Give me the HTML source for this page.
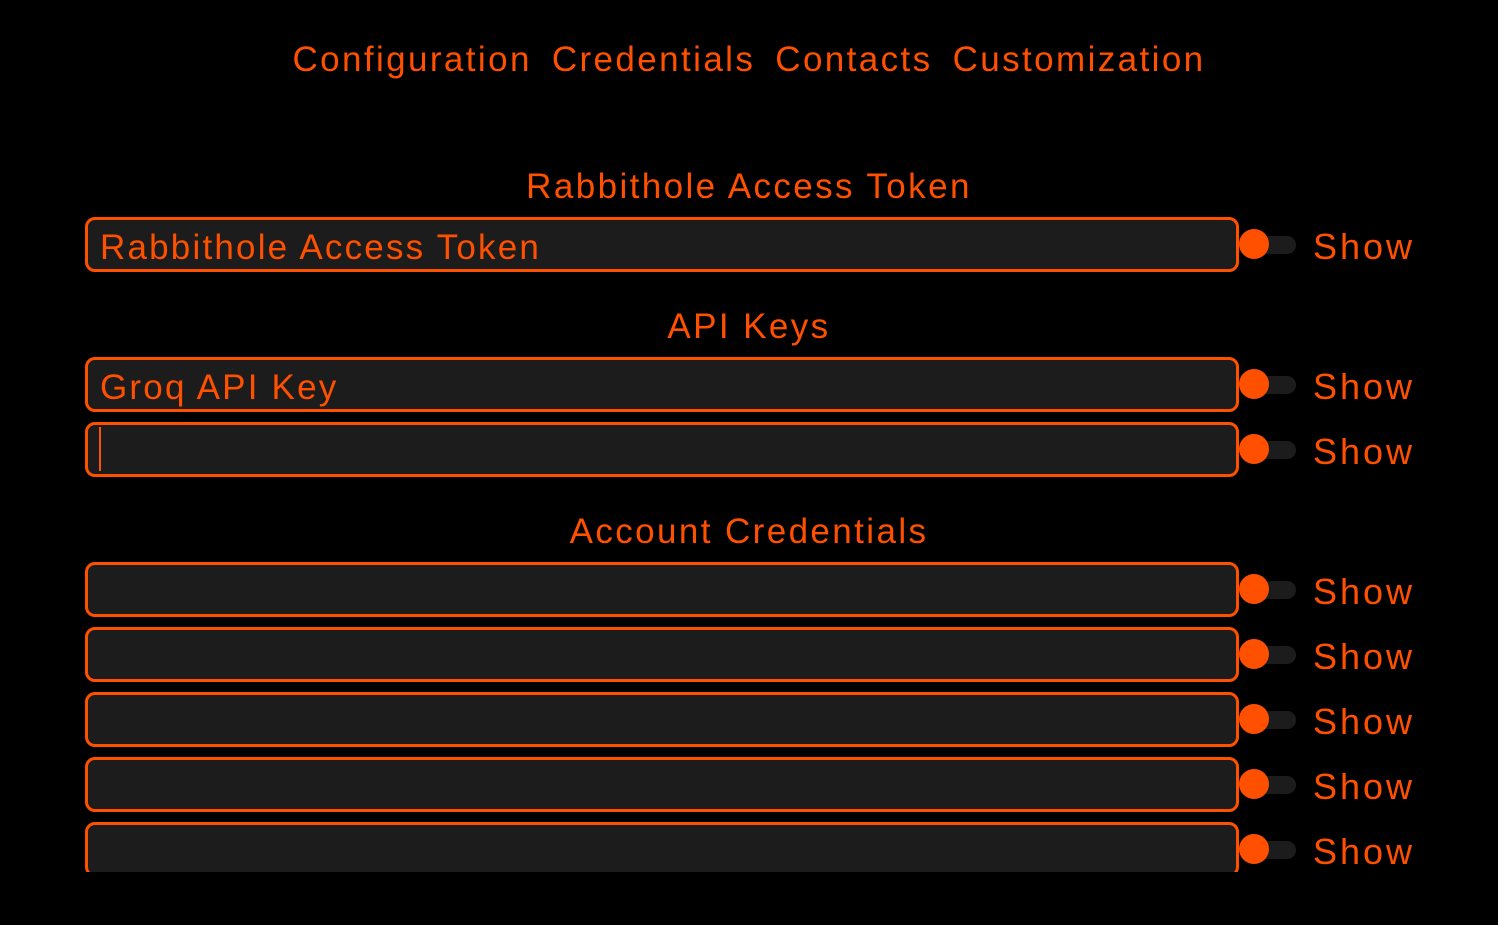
<!DOCTYPE html>
<html><head><style>
body{margin:0;background:#000;width:1498px;height:925px;overflow:hidden;font-family:"Liberation Sans",sans-serif;color:#ff5000;}
.nav{position:absolute;top:40px;left:0;width:1498px;text-align:center;font-size:35px;white-space:nowrap;letter-spacing:2.4px}
.nav span{margin:0 10px}
.h{position:absolute;left:0;width:1498px;text-align:center;font-size:35px;white-space:nowrap;letter-spacing:2.4px}
.clip{position:absolute;left:0;top:0;width:1498px;height:872px;overflow:hidden}
.box{position:absolute;left:85px;height:49px;border:3px solid #ff5000;border-radius:10px;background:#1c1c1c;font-size:35px;line-height:55px;padding-left:12px;box-sizing:content-box;width:1136px;letter-spacing:2.2px}
.track{position:absolute;left:1240px;width:56px;height:18px;border-radius:9px;background:#1c1c1c}
.knob{position:absolute;left:1239px;width:30px;height:30px;border-radius:50%;background:#ff5000}
.show{position:absolute;left:1313px;font-size:36px;line-height:40px;letter-spacing:3px}
.cur{position:absolute;left:99px;width:2px;height:44px;background:#ff5000}
</style></head><body>
<div class="nav"><span>Configuration</span><span>Credentials</span><span>Contacts</span><span>Customization</span></div>
<div class="h" style="top:167px">Rabbithole Access Token</div>
<div class="h" style="top:307px">API Keys</div>
<div class="h" style="top:512px">Account Credentials</div>
<div class="clip">
<div class="box" style="top:217px">Rabbithole Access Token</div>
<div class="box" style="top:357px">Groq API Key</div>
<div class="box" style="top:422px"></div>
<div class="cur" style="top:427px"></div>
<div class="box" style="top:562px"></div>
<div class="box" style="top:627px"></div>
<div class="box" style="top:692px"></div>
<div class="box" style="top:757px"></div>
<div class="box" style="top:822px"></div>
</div>
<div class="track" style="top:236px"></div><div class="knob" style="top:229px"></div><div class="show" style="top:227px">Show</div>
<div class="track" style="top:376px"></div><div class="knob" style="top:369px"></div><div class="show" style="top:367px">Show</div>
<div class="track" style="top:441px"></div><div class="knob" style="top:434px"></div><div class="show" style="top:432px">Show</div>
<div class="track" style="top:581px"></div><div class="knob" style="top:574px"></div><div class="show" style="top:572px">Show</div>
<div class="track" style="top:646px"></div><div class="knob" style="top:639px"></div><div class="show" style="top:637px">Show</div>
<div class="track" style="top:711px"></div><div class="knob" style="top:704px"></div><div class="show" style="top:702px">Show</div>
<div class="track" style="top:776px"></div><div class="knob" style="top:769px"></div><div class="show" style="top:767px">Show</div>
<div class="track" style="top:841px"></div><div class="knob" style="top:834px"></div><div class="show" style="top:832px">Show</div>
</body></html>
